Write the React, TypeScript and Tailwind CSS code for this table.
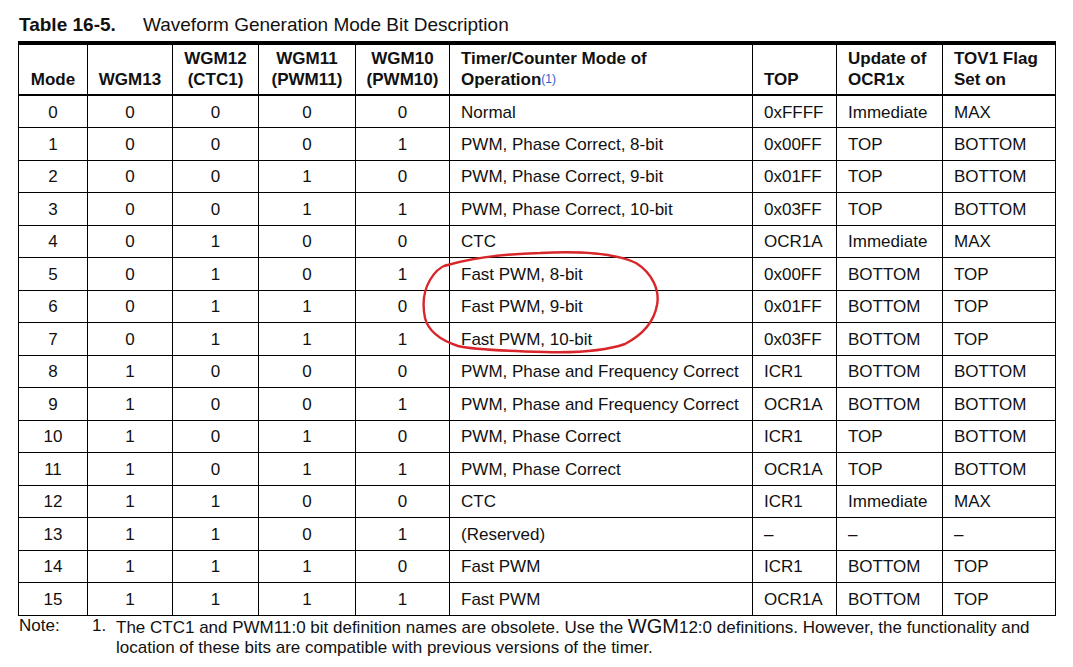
const rows: string[][] = [
  ['0', '0', '0', '0', '0', 'Normal', '0xFFFF', 'Immediate', 'MAX'],
  ['1', '0', '0', '0', '1', 'PWM, Phase Correct, 8-bit', '0x00FF', 'TOP', 'BOTTOM'],
  ['2', '0', '0', '1', '0', 'PWM, Phase Correct, 9-bit', '0x01FF', 'TOP', 'BOTTOM'],
  ['3', '0', '0', '1', '1', 'PWM, Phase Correct, 10-bit', '0x03FF', 'TOP', 'BOTTOM'],
  ['4', '0', '1', '0', '0', 'CTC', 'OCR1A', 'Immediate', 'MAX'],
  ['5', '0', '1', '0', '1', 'Fast PWM, 8-bit', '0x00FF', 'BOTTOM', 'TOP'],
  ['6', '0', '1', '1', '0', 'Fast PWM, 9-bit', '0x01FF', 'BOTTOM', 'TOP'],
  ['7', '0', '1', '1', '1', 'Fast PWM, 10-bit', '0x03FF', 'BOTTOM', 'TOP'],
  ['8', '1', '0', '0', '0', 'PWM, Phase and Frequency Correct', 'ICR1', 'BOTTOM', 'BOTTOM'],
  ['9', '1', '0', '0', '1', 'PWM, Phase and Frequency Correct', 'OCR1A', 'BOTTOM', 'BOTTOM'],
  ['10', '1', '0', '1', '0', 'PWM, Phase Correct', 'ICR1', 'TOP', 'BOTTOM'],
  ['11', '1', '0', '1', '1', 'PWM, Phase Correct', 'OCR1A', 'TOP', 'BOTTOM'],
  ['12', '1', '1', '0', '0', 'CTC', 'ICR1', 'Immediate', 'MAX'],
  ['13', '1', '1', '0', '1', '(Reserved)', '–', '–', '–'],
  ['14', '1', '1', '1', '0', 'Fast PWM', 'ICR1', 'BOTTOM', 'TOP'],
  ['15', '1', '1', '1', '1', 'Fast PWM', 'OCR1A', 'BOTTOM', 'TOP'],
]

const th = 'border-x border-black align-bottom pb-[4px] font-bold leading-[21px]'
const td = 'border border-black h-[32.5px] p-0 pt-[2px] leading-[20px]'

export default function App() {
  return (
    <div className="relative w-[1073px] h-[667px] bg-white text-[#111] font-['Liberation_Sans',Arial,sans-serif] overflow-hidden">
      <div className="pl-[19px] pt-[14px] text-[19px] leading-[22px] flex">
        <span className="font-bold w-[124px]">Table 16-5.</span>
        <span>Waveform Generation Mode Bit Description</span>
      </div>

      <div className="ml-[18px] mt-[5px] w-[1038px] h-[4px] bg-black" />

      <table className="ml-[18px] w-[1037px] table-fixed border-collapse text-[17px]">
        <colgroup>
          <col className="w-[69px]" />
          <col className="w-[85px]" />
          <col className="w-[86px]" />
          <col className="w-[97px]" />
          <col className="w-[94px]" />
          <col className="w-[303px]" />
          <col className="w-[84px]" />
          <col className="w-[106px]" />
          <col className="w-[113px]" />
        </colgroup>
        <thead>
          <tr className="h-[50px] border-b-2 border-black">
            <th className={`${th} text-center`}>Mode</th>
            <th className={`${th} text-center`}>WGM13</th>
            <th className={`${th} text-center`}>
              WGM12
              <br />
              (CTC1)
            </th>
            <th className={`${th} text-center`}>
              WGM11
              <br />
              (PWM11)
            </th>
            <th className={`${th} text-center`}>
              WGM10
              <br />
              (PWM10)
            </th>
            <th className={`${th} text-left pl-[11px]`}>
              Timer/Counter Mode of
              <br />
              Operation
              <sup className="text-[12px] leading-none font-normal text-[#2a62c9] relative -top-[2px]">(1)</sup>
            </th>
            <th className={`${th} text-left pl-[11px]`}>TOP</th>
            <th className={`${th} text-left pl-[11px]`}>
              Update of
              <br />
              OCR1x
            </th>
            <th className={`${th} text-left pl-[11px]`}>
              TOV1 Flag
              <br />
              Set on
            </th>
          </tr>
        </thead>
        <tbody>
          {rows.map((r) => (
            <tr key={r[0]}>
              {r.map((c, i) => (
                <td key={i} className={`${td} ${i < 5 ? 'text-center' : 'text-left pl-[11px]'}`}>
                  {c}
                </td>
              ))}
            </tr>
          ))}
        </tbody>
      </table>

      <div className="text-[17px] leading-[20px] flex">
        <span className="pl-[19px] w-[92px]">Note:</span>
        <span className="w-[24px]">1.</span>
        <span className="w-[930px]">
          The CTC1 and PWM11:0 bit definition names are obsolete. Use the{' '}
          <span className="text-[20px] leading-none">WGM</span>12:0 definitions. However, the functionality and
          location of these bits are compatible with previous versions of the timer.
        </span>
      </div>

      <svg
        className="absolute left-0 top-0 pointer-events-none"
        width="1073"
        height="667"
        viewBox="0 0 1073 667"
        fill="none"
      >
        <path
          d="M444 266 C 470 258, 500 254, 540 253 C 580 251, 615 253, 636 263 C 652 273, 660 290, 657 305 C 654 322, 644 334, 625 344 C 605 351, 580 353, 545 352 C 505 351, 475 350, 458 346 C 440 340, 428 330, 425 318 C 422 303, 424 290, 430 280 C 434 273, 438 268, 446 265"
          stroke="#d8262b"
          strokeWidth="2.4"
          strokeLinecap="round"
        />
      </svg>
    </div>
  )
}
